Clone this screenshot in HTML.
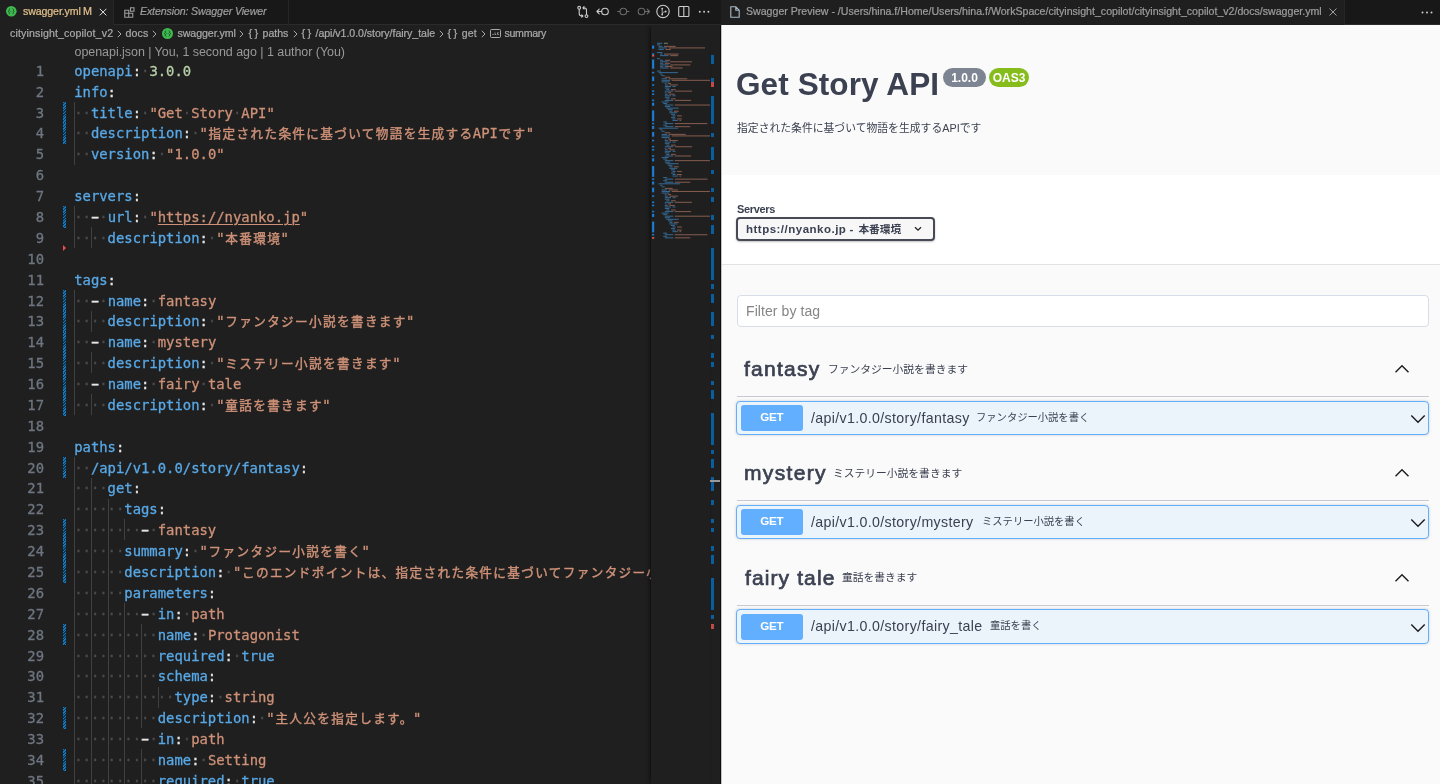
<!DOCTYPE html>
<html lang="ja">
<head>
<meta charset="utf-8">
<title>swagger.yml — Swagger Preview</title>
<style>
html,body{margin:0;padding:0;width:1440px;height:784px;overflow:hidden;background:#1f1f1f}
body{position:relative;font-family:"Liberation Sans","Noto Sans CJK JP",sans-serif;-webkit-font-smoothing:antialiased}
*{box-sizing:border-box}
#left{position:absolute;left:0;top:0;width:721px;height:784px;background:#1f1f1f;overflow:hidden}
#right{position:absolute;left:721px;top:0;width:719px;height:784px;background:#fafafa;overflow:hidden}
/* ---------- tab bars ---------- */
.tabbar{position:absolute;left:0;top:0;right:0;height:24.5px;background:#181818;border-bottom:1px solid #2b2b2b}
.tab{position:absolute;top:0;height:24.5px;font-size:10.6px;line-height:23px;white-space:nowrap;border-right:1px solid #262626}
.tab.act{background:#1f1f1f;height:24.5px}
.tab span{position:absolute;top:0;-webkit-text-stroke:.22px currentColor}
/* ---------- breadcrumbs ---------- */
.bc{position:absolute;left:0;top:24.45px;-webkit-text-stroke:.22px currentColor;width:651px;height:18px;font-size:10.6px;line-height:18px;color:#a9a9a9;white-space:nowrap}
.bc span{position:absolute;top:0}
.bc svg,.tab svg,.acts svg{position:absolute}
/* ---------- editor ---------- */
#ed{position:absolute;left:0;top:0;width:651px;height:784px;overflow:hidden;will-change:transform}
.lens{position:absolute;left:74.5px;top:41.7px;height:20px;line-height:20px;font-size:12.5px;color:#999;white-space:nowrap;letter-spacing:-0.05px}
.ln{position:absolute;left:0;width:1400px;height:20.885px;line-height:20.885px;font-family:"DejaVu Sans Mono","Liberation Mono","Noto Sans CJK JP",monospace;font-size:13.89px;white-space:pre;color:#d4d4d4;-webkit-text-stroke:0.3px currentColor}
.no{position:absolute;left:0;top:.8px;width:44px;text-align:right;color:#6e7681}
.c{position:absolute;left:74.2px;top:.8px}
.c span,.c i,.c u{font-style:normal}
.k{color:#58a8e6}.s{color:#ce9178}.n{color:#b5cea8}.p{color:#e6e6e6}.d{display:inline-block;transform:scaleX(1.7);-webkit-text-stroke:.5px currentColor}
.w{color:#4b4b4b}
.j{font-size:12.6px;letter-spacing:1.37px;position:relative;left:.7px;-webkit-text-stroke:.4px currentColor}
.s u{text-decoration:underline;text-underline-offset:2px;text-decoration-thickness:1px}
.g{position:absolute;top:0;width:1px;height:21px;background:#404040}
.m{position:absolute;left:63px;top:0;width:3.2px;height:21.4px;background:repeating-linear-gradient(135deg,#1479bd 0,#1479bd 1px,#0c3756 1px,#0c3756 2px)}
/* minimap */
#mm{position:absolute;left:651px;top:24.5px;width:70px;height:760px;background:#1f1f1f;box-shadow:-3px 0 4px -2px rgba(0,0,0,.6)}
#ruler{position:absolute;left:710px;top:42.5px;width:11px;height:742px;border-left:1px solid #1c1c1c}
#ruler b{position:absolute;left:0;width:3.2px;background:#085f9f}
#ruler b.r{background:#c04a44}
#ruler i{position:absolute;left:-1px;width:11px;height:1.6px;background:#9a9a9a}
/* ---------- swagger ---------- */
#sw{position:absolute;left:0;top:24.5px;width:719px;height:760px;background:#fafafa;color:#3b4151}
#sw .abs{position:absolute;white-space:nowrap}
.badge{position:absolute;top:43.5px;height:19px;border-radius:10px;color:#fff;font-weight:bold;font-size:12px;line-height:20.2px;text-align:center}
.tagname{font-size:21px;line-height:30px;color:#3b4151;-webkit-text-stroke:0.7px #3b4151}
.tagdesc{font-size:10.77px;line-height:20px;color:#3b4151}
.rule{position:absolute;left:16px;width:691.5px;height:1px;background:#c9cacf}
.op{position:absolute;left:15.2px;width:692.8px;height:34.5px;border:1px solid #61affe;border-radius:4px;background:#ebf3fb;box-shadow:0 0 3px rgba(0,0,0,.19)}
.get{position:absolute;left:3.8px;top:3.7px;width:61.6px;height:25.5px;border-radius:3px;background:#61affe;color:#fff;font-weight:bold;font-size:11.6px;line-height:24.2px;text-align:center;letter-spacing:-0.3px}
.path{position:absolute;left:73.5px;top:0;height:32.5px;line-height:32.5px;font-size:14.2px;letter-spacing:0.35px;color:#3b4151;white-space:nowrap}
.sum{position:absolute;top:0;height:32.5px;line-height:32.5px;font-size:10.3px;color:#3b4151;white-space:nowrap}
.tab span,.bc,#sw .abs,.badge,.get,.path,.sum{will-change:transform}
</style>
</head>
<body>
<div id="left">
  <div class="tabbar">
    <div class="tab act" style="left:0;width:113.5px;color:#e2c08d">
      <svg style="left:6.3px;top:6.2px" width="10.6" height="10.6" viewBox="0 0 22 22"><circle cx="11" cy="11" r="11" fill="#3fb950"/><path d="M8.5 5.5c-2 0-1.8 1.6-1.8 3 0 1.300-.6 2.100-1.700 2.500 1.100.4 1.700 1.200 1.700 2.500 0 1.400-.2 3 1.800 3M13.500 5.500c2 0 1.800 1.600 1.800 3 0 1.300.6 2.100 1.700 2.500-1.100.4-1.700 1.200-1.700 2.500 0 1.400.2 3-1.800 3" fill="none" stroke="#0d3a17" stroke-width="1.500"/><circle cx="9.600" cy="11" r=".8" fill="#0d3a17"/><circle cx="12.400" cy="11" r=".8" fill="#0d3a17"/></svg>
      <span style="left:22.5px;letter-spacing:-.1px">swagger.yml</span><span style="left:83.2px;font-size:10.8px">M</span>
      <svg style="left:99px;top:7.8px" width="8.2" height="8.2" viewBox="0 0 10 10"><path d="M1 1l8 8M9 1l-8 8" stroke="#e6e6e6" stroke-width="1.200" fill="none"/></svg>
    </div>
    <div class="tab" style="left:113.500px;width:175px;color:#9d9d9d;font-style:italic">
      <svg style="left:10.500px;top:6.500px" width="11" height="11" viewBox="0 0 22 22" fill="none" stroke="#9d9d9d" stroke-width="2.200"><path d="M1.500 6.500h8v14h-8zM9.500 12.500h8v8h-8zM1.500 12.500h8M13 1.500h7v7h-7z"/></svg>
      <span style="left:26px;letter-spacing:-.12px">Extension: Swagger Viewer</span>
    </div>
    <div class="acts">
      <svg style="left:570px;top:0" width="150" height="24" viewBox="0 0 150 24" fill="none" stroke="#cccccc" stroke-width="1.1" stroke-linecap="round" stroke-linejoin="round">
        <g>
          <circle cx="9.2" cy="7.8" r="1.4"/><circle cx="16.5" cy="16.1" r="1.4"/>
          <path d="M9.2 9.3v4.2a2.500 2.500 0 0 0 2.500 2.500h1.100M11.700 14.800l1.200 1.200-1.200 1.200"/>
          <path d="M16.500 14.600v-4.300a2.500 2.500 0 0 0-2.500-2.500h-1.100M14.100 6.600l-1.200 1.200 1.200 1.200"/>
        </g>
        <g>
          <circle cx="35" cy="11.500" r="3.300"/><path d="M31.600 11.500h-4.600M29.200 9.200l-2.300 2.300 2.300 2.300"/>
        </g>
        <g stroke="#6a6a6a">
          <circle cx="53.300" cy="11.500" r="3.300"/><path d="M50 11.500h-2.300M56.600 11.500h2.300"/>
        </g>
        <g stroke="#6a6a6a">
          <circle cx="71.500" cy="11.500" r="3.300"/><path d="M74.800 11.500h4.600M77.200 9.200l2.300 2.300-2.300 2.300"/>
        </g>
        <g>
          <circle cx="93" cy="11.400" r="6.200"/>
          <path d="M92.200 9v5.200M95.400 11.600c-1.600.300-2.800.9-3.200 2.200" stroke-width=".8"/>
          <circle cx="92.200" cy="8.600" r=".9" fill="#cccccc" stroke="none"/><circle cx="92.200" cy="14.600" r=".9" fill="#cccccc" stroke="none"/><circle cx="95.700" cy="11.500" r=".9" fill="#cccccc" stroke="none"/>
        </g>
        <g>
          <rect x="108.700" y="6.500" width="10.200" height="10" rx="1"/><path d="M113.800 6.500v10"/>
        </g>
        <g fill="#cccccc" stroke="none"><circle cx="129.800" cy="11.800" r=".95"/><circle cx="134.100" cy="11.800" r=".95"/><circle cx="138.400" cy="11.800" r=".95"/></g>
      </svg>
    </div>
  </div>
  <div class="bc"><span style="left:10px;letter-spacing:.14px">cityinsight_copilot_v2</span>
<svg style="left:116.5px;top:5.500px" width="5" height="8" viewBox="0 0 5 8"><path d="M.8.800l3.200 3.200-3.200 3.200" fill="none" stroke="#a9a9a9" stroke-width="1"/></svg>
<span style="left:125.500px;letter-spacing:.1px">docs</span>
<svg style="left:152.0px;top:5.500px" width="5" height="8" viewBox="0 0 5 8"><path d="M.8.800l3.200 3.200-3.200 3.200" fill="none" stroke="#a9a9a9" stroke-width="1"/></svg>
<svg style="left:161.5px;top:3.500px" width="11" height="11" viewBox="0 0 22 22"><circle cx="11" cy="11" r="11" fill="#3fb950"/><path d="M8.500 5.500c-2 0-1.800 1.600-1.800 3 0 1.300-.6 2.100-1.700 2.500 1.100.4 1.700 1.200 1.700 2.500 0 1.400-.2 3 1.800 3M13.500 5.500c2 0 1.800 1.600 1.800 3 0 1.300.6 2.100 1.700 2.500-1.100.4-1.700 1.200-1.700 2.500 0 1.400.2 3-1.800 3" fill="none" stroke="#0d3a17" stroke-width="1.500"/><circle cx="9.600" cy="11" r=".8" fill="#0d3a17"/><circle cx="12.400" cy="11" r=".8" fill="#0d3a17"/></svg>
<span style="left:177.500px;letter-spacing:-.05px">swagger.yml</span>
<svg style="left:239.0px;top:5.500px" width="5" height="8" viewBox="0 0 5 8"><path d="M.8.800l3.200 3.200-3.200 3.200" fill="none" stroke="#a9a9a9" stroke-width="1"/></svg>
<span style="left:248.5px;top:-.5px;font-size:11.2px;letter-spacing:2.2px">{}</span>
<span style="left:262.500px">paths</span>
<svg style="left:292.5px;top:5.500px" width="5" height="8" viewBox="0 0 5 8"><path d="M.8.800l3.200 3.200-3.200 3.200" fill="none" stroke="#a9a9a9" stroke-width="1"/></svg>
<span style="left:301.5px;top:-.5px;font-size:11.2px;letter-spacing:2.2px">{}</span>
<span style="left:315.500px;letter-spacing:-.04px">/api/v1.0.0/story/fairy_tale</span>
<svg style="left:439.0px;top:5.500px" width="5" height="8" viewBox="0 0 5 8"><path d="M.8.800l3.200 3.200-3.200 3.200" fill="none" stroke="#a9a9a9" stroke-width="1"/></svg>
<span style="left:447.5px;top:-.5px;font-size:11.2px;letter-spacing:2.2px">{}</span>
<span style="left:461.750px;letter-spacing:.1px">get</span>
<svg style="left:481.0px;top:5.500px" width="5" height="8" viewBox="0 0 5 8"><path d="M.8.800l3.200 3.200-3.200 3.200" fill="none" stroke="#a9a9a9" stroke-width="1"/></svg>
<svg style="left:490px;top:4.500px" width="11" height="9" viewBox="0 0 11 9" fill="none" stroke="#a9a9a9" stroke-width="1"><rect x=".5" y=".5" width="10" height="8" rx="1"/><path d="M2.300 5.500h1.500M5 3.500v2h1.200M8.800 3.800h-1.300v1.700h1.300" stroke-width=".8"/></svg>
<span style="left:504.500px;letter-spacing:-.29px">summary</span></div>
  <div id="ed">
    <div class="lens">openapi.json | You, 1 second ago | 1 author (You)</div>
<div style="position:absolute;left:62.8px;top:244.9px;width:0;height:0;border-top:3.3px solid transparent;border-bottom:3.3px solid transparent;border-left:3.9px solid #f14c4c"></div>
<div class="ln" style="top:60.00px"><span class="no">1</span><span class="c"><span class="k">openapi</span><span class="p">:</span><i class="w">·</i><span class="n">3.0.0</span></span></div>
<div class="ln" style="top:80.89px"><span class="no">2</span><span class="c"><span class="k">info</span><span class="p">:</span></span></div>
<div class="ln" style="top:101.77px"><span class="no">3</span><b class="m"></b><b class="g" style="left:74.20px"></b><span class="c"><i class="w">··</i><span class="k">title</span><span class="p">:</span><i class="w">·</i><span class="s">"Get<i class="w">·</i>Story<i class="w">·</i>API"</span></span></div>
<div class="ln" style="top:122.66px"><span class="no">4</span><b class="m"></b><b class="g" style="left:74.20px"></b><span class="c"><i class="w">··</i><span class="k">description</span><span class="p">:</span><i class="w">·</i><span class="s">"<span class="j">指定された条件に基づいて物語を生成する</span>API<span class="j">です</span>"</span></span></div>
<div class="ln" style="top:143.54px"><span class="no">5</span><b class="g" style="left:74.20px"></b><span class="c"><i class="w">··</i><span class="k">version</span><span class="p">:</span><i class="w">·</i><span class="s">"1.0.0"</span></span></div>
<div class="ln" style="top:164.43px"><span class="no">6</span><span class="c"></span></div>
<div class="ln" style="top:185.31px"><span class="no">7</span><span class="c"><span class="k">servers</span><span class="p">:</span></span></div>
<div class="ln" style="top:206.20px"><span class="no">8</span><b class="m"></b><b class="g" style="left:74.20px"></b><span class="c"><i class="w">··</i><span class="p d">-</span><i class="w">·</i><span class="k">url</span><span class="p">:</span><i class="w">·</i><span class="s">"<u>https://nyanko.jp</u>"</span></span></div>
<div class="ln" style="top:227.08px"><span class="no">9</span><b class="g" style="left:74.20px"></b><b class="g" style="left:90.93px"></b><span class="c"><i class="w">····</i><span class="k">description</span><span class="p">:</span><i class="w">·</i><span class="s">"<span class="j">本番環境</span>"</span></span></div>
<div class="ln" style="top:247.97px"><span class="no">10</span><span class="c"></span></div>
<div class="ln" style="top:268.85px"><span class="no">11</span><span class="c"><span class="k">tags</span><span class="p">:</span></span></div>
<div class="ln" style="top:289.74px"><span class="no">12</span><b class="m"></b><b class="g" style="left:74.20px"></b><span class="c"><i class="w">··</i><span class="p d">-</span><i class="w">·</i><span class="k">name</span><span class="p">:</span><i class="w">·</i><span class="s">fantasy</span></span></div>
<div class="ln" style="top:310.62px"><span class="no">13</span><b class="m"></b><b class="g" style="left:74.20px"></b><b class="g" style="left:90.93px"></b><span class="c"><i class="w">····</i><span class="k">description</span><span class="p">:</span><i class="w">·</i><span class="s">"<span class="j">ファンタジー小説を書きます</span>"</span></span></div>
<div class="ln" style="top:331.50px"><span class="no">14</span><b class="m"></b><b class="g" style="left:74.20px"></b><span class="c"><i class="w">··</i><span class="p d">-</span><i class="w">·</i><span class="k">name</span><span class="p">:</span><i class="w">·</i><span class="s">mystery</span></span></div>
<div class="ln" style="top:352.39px"><span class="no">15</span><b class="m"></b><b class="g" style="left:74.20px"></b><b class="g" style="left:90.93px"></b><span class="c"><i class="w">····</i><span class="k">description</span><span class="p">:</span><i class="w">·</i><span class="s">"<span class="j">ミステリー小説を書きます</span>"</span></span></div>
<div class="ln" style="top:373.28px"><span class="no">16</span><b class="m"></b><b class="g" style="left:74.20px"></b><span class="c"><i class="w">··</i><span class="p d">-</span><i class="w">·</i><span class="k">name</span><span class="p">:</span><i class="w">·</i><span class="s">fairy<i class="w">·</i>tale</span></span></div>
<div class="ln" style="top:394.16px"><span class="no">17</span><b class="m"></b><b class="g" style="left:74.20px"></b><b class="g" style="left:90.93px"></b><span class="c"><i class="w">····</i><span class="k">description</span><span class="p">:</span><i class="w">·</i><span class="s">"<span class="j">童話を書きます</span>"</span></span></div>
<div class="ln" style="top:415.05px"><span class="no">18</span><span class="c"></span></div>
<div class="ln" style="top:435.93px"><span class="no">19</span><span class="c"><span class="k">paths</span><span class="p">:</span></span></div>
<div class="ln" style="top:456.82px"><span class="no">20</span><b class="m"></b><b class="g" style="left:74.20px"></b><span class="c"><i class="w">··</i><span class="k">/api/v1.0.0/story/fantasy</span><span class="p">:</span></span></div>
<div class="ln" style="top:477.70px"><span class="no">21</span><b class="g" style="left:74.20px"></b><b class="g" style="left:90.93px"></b><span class="c"><i class="w">····</i><span class="k">get</span><span class="p">:</span></span></div>
<div class="ln" style="top:498.59px"><span class="no">22</span><b class="g" style="left:74.20px"></b><b class="g" style="left:90.93px"></b><b class="g" style="left:107.65px"></b><span class="c"><i class="w">······</i><span class="k">tags</span><span class="p">:</span></span></div>
<div class="ln" style="top:519.47px"><span class="no">23</span><b class="m"></b><b class="g" style="left:74.20px"></b><b class="g" style="left:90.93px"></b><b class="g" style="left:107.65px"></b><b class="g" style="left:124.38px"></b><span class="c"><i class="w">········</i><span class="p d">-</span><i class="w">·</i><span class="s">fantasy</span></span></div>
<div class="ln" style="top:540.36px"><span class="no">24</span><b class="m"></b><b class="g" style="left:74.20px"></b><b class="g" style="left:90.93px"></b><b class="g" style="left:107.65px"></b><span class="c"><i class="w">······</i><span class="k">summary</span><span class="p">:</span><i class="w">·</i><span class="s">"<span class="j">ファンタジー小説を書く</span>"</span></span></div>
<div class="ln" style="top:561.24px"><span class="no">25</span><b class="m"></b><b class="g" style="left:74.20px"></b><b class="g" style="left:90.93px"></b><b class="g" style="left:107.65px"></b><span class="c"><i class="w">······</i><span class="k">description</span><span class="p">:</span><i class="w">·</i><span class="s">"<span class="j">このエンドポイントは、指定された条件に基づいてファンタジー小説を生成します。</span>"</span></span></div>
<div class="ln" style="top:582.12px"><span class="no">26</span><b class="g" style="left:74.20px"></b><b class="g" style="left:90.93px"></b><b class="g" style="left:107.65px"></b><span class="c"><i class="w">······</i><span class="k">parameters</span><span class="p">:</span></span></div>
<div class="ln" style="top:603.01px"><span class="no">27</span><b class="g" style="left:74.20px"></b><b class="g" style="left:90.93px"></b><b class="g" style="left:107.65px"></b><b class="g" style="left:124.38px"></b><span class="c"><i class="w">········</i><span class="p d">-</span><i class="w">·</i><span class="k">in</span><span class="p">:</span><i class="w">·</i><span class="s">path</span></span></div>
<div class="ln" style="top:623.90px"><span class="no">28</span><b class="m"></b><b class="g" style="left:74.20px"></b><b class="g" style="left:90.93px"></b><b class="g" style="left:107.65px"></b><b class="g" style="left:124.38px"></b><b class="g" style="left:141.10px"></b><span class="c"><i class="w">··········</i><span class="k">name</span><span class="p">:</span><i class="w">·</i><span class="s">Protagonist</span></span></div>
<div class="ln" style="top:644.78px"><span class="no">29</span><b class="g" style="left:74.20px"></b><b class="g" style="left:90.93px"></b><b class="g" style="left:107.65px"></b><b class="g" style="left:124.38px"></b><b class="g" style="left:141.10px"></b><span class="c"><i class="w">··········</i><span class="k">required</span><span class="p">:</span><i class="w">·</i><span class="k">true</span></span></div>
<div class="ln" style="top:665.67px"><span class="no">30</span><b class="g" style="left:74.20px"></b><b class="g" style="left:90.93px"></b><b class="g" style="left:107.65px"></b><b class="g" style="left:124.38px"></b><b class="g" style="left:141.10px"></b><span class="c"><i class="w">··········</i><span class="k">schema</span><span class="p">:</span></span></div>
<div class="ln" style="top:686.55px"><span class="no">31</span><b class="g" style="left:74.20px"></b><b class="g" style="left:90.93px"></b><b class="g" style="left:107.65px"></b><b class="g" style="left:124.38px"></b><b class="g" style="left:141.10px"></b><b class="g" style="left:157.82px"></b><span class="c"><i class="w">············</i><span class="k">type</span><span class="p">:</span><i class="w">·</i><span class="s">string</span></span></div>
<div class="ln" style="top:707.44px"><span class="no">32</span><b class="m"></b><b class="g" style="left:74.20px"></b><b class="g" style="left:90.93px"></b><b class="g" style="left:107.65px"></b><b class="g" style="left:124.38px"></b><b class="g" style="left:141.10px"></b><span class="c"><i class="w">··········</i><span class="k">description</span><span class="p">:</span><i class="w">·</i><span class="s">"<span class="j">主人公を指定します。</span>"</span></span></div>
<div class="ln" style="top:728.32px"><span class="no">33</span><b class="g" style="left:74.20px"></b><b class="g" style="left:90.93px"></b><b class="g" style="left:107.65px"></b><b class="g" style="left:124.38px"></b><span class="c"><i class="w">········</i><span class="p d">-</span><i class="w">·</i><span class="k">in</span><span class="p">:</span><i class="w">·</i><span class="s">path</span></span></div>
<div class="ln" style="top:749.21px"><span class="no">34</span><b class="m"></b><b class="g" style="left:74.20px"></b><b class="g" style="left:90.93px"></b><b class="g" style="left:107.65px"></b><b class="g" style="left:124.38px"></b><b class="g" style="left:141.10px"></b><span class="c"><i class="w">··········</i><span class="k">name</span><span class="p">:</span><i class="w">·</i><span class="s">Setting</span></span></div>
<div class="ln" style="top:770.09px"><span class="no">35</span><b class="g" style="left:74.20px"></b><b class="g" style="left:90.93px"></b><b class="g" style="left:107.65px"></b><b class="g" style="left:124.38px"></b><b class="g" style="left:141.10px"></b><span class="c"><i class="w">··········</i><span class="k">required</span><span class="p">:</span><i class="w">·</i><span class="k">true</span></span></div>
  </div>
  <div id="mm"><svg width="70" height="760" viewBox="0 0 70 760" style="position:absolute;left:0;top:0">
<rect x="6.0" y="17.75" width="5.4" height="1.05" fill="#35668f"/>
<rect x="13.0" y="17.75" width="3.9" height="1.05" fill="#6e7f69"/>
<rect x="6.0" y="19.29" width="3.1" height="1.05" fill="#35668f"/>
<rect x="7.5" y="20.84" width="3.9" height="1.05" fill="#35668f"/>
<rect x="13.0" y="20.84" width="11.6" height="1.05" fill="#815a4d"/>
<rect x="7.5" y="22.38" width="8.5" height="1.05" fill="#35668f"/>
<rect x="17.6" y="22.38" width="36.4" height="1.05" fill="#815a4d"/>
<rect x="7.5" y="23.93" width="5.4" height="1.05" fill="#35668f"/>
<rect x="14.5" y="23.93" width="5.4" height="1.05" fill="#815a4d"/>
<rect x="6.0" y="27.01" width="5.4" height="1.05" fill="#35668f"/>
<rect x="9.1" y="28.56" width="2.3" height="1.05" fill="#35668f"/>
<rect x="13.0" y="28.56" width="14.7" height="1.05" fill="#815a4d"/>
<rect x="9.1" y="30.10" width="8.5" height="1.05" fill="#35668f"/>
<rect x="19.2" y="30.10" width="7.8" height="1.05" fill="#815a4d"/>
<rect x="6.0" y="33.19" width="3.1" height="1.05" fill="#35668f"/>
<rect x="9.1" y="34.73" width="3.1" height="1.05" fill="#35668f"/>
<rect x="13.8" y="34.73" width="5.4" height="1.05" fill="#815a4d"/>
<rect x="9.1" y="36.28" width="8.5" height="1.05" fill="#35668f"/>
<rect x="19.2" y="36.28" width="21.7" height="1.05" fill="#815a4d"/>
<rect x="9.1" y="37.82" width="3.1" height="1.05" fill="#35668f"/>
<rect x="13.8" y="37.82" width="5.4" height="1.05" fill="#815a4d"/>
<rect x="9.1" y="39.37" width="8.5" height="1.05" fill="#35668f"/>
<rect x="19.2" y="39.37" width="20.2" height="1.05" fill="#815a4d"/>
<rect x="9.1" y="40.91" width="3.1" height="1.05" fill="#35668f"/>
<rect x="13.8" y="40.91" width="7.8" height="1.05" fill="#815a4d"/>
<rect x="9.1" y="42.45" width="8.5" height="1.05" fill="#35668f"/>
<rect x="19.2" y="42.45" width="12.4" height="1.05" fill="#815a4d"/>
<rect x="6.0" y="45.54" width="3.9" height="1.05" fill="#35668f"/>
<rect x="7.5" y="47.09" width="19.4" height="1.05" fill="#35668f"/>
<rect x="9.1" y="48.63" width="2.3" height="1.05" fill="#35668f"/>
<rect x="10.6" y="50.17" width="3.1" height="1.05" fill="#35668f"/>
<rect x="13.8" y="51.72" width="5.4" height="1.05" fill="#815a4d"/>
<rect x="10.6" y="53.26" width="5.4" height="1.05" fill="#35668f"/>
<rect x="17.6" y="53.26" width="18.6" height="1.05" fill="#815a4d"/>
<rect x="10.6" y="54.81" width="8.5" height="1.05" fill="#35668f"/>
<rect x="20.7" y="54.81" width="38.6" height="1.05" fill="#815a4d"/>
<rect x="10.6" y="56.35" width="7.8" height="1.05" fill="#35668f"/>
<rect x="13.8" y="57.89" width="1.6" height="1.05" fill="#35668f"/>
<rect x="16.9" y="57.89" width="3.1" height="1.05" fill="#815a4d"/>
<rect x="13.8" y="59.44" width="3.1" height="1.05" fill="#35668f"/>
<rect x="18.4" y="59.44" width="8.5" height="1.05" fill="#815a4d"/>
<rect x="13.8" y="60.98" width="6.2" height="1.05" fill="#35668f"/>
<rect x="21.5" y="60.98" width="3.1" height="1.05" fill="#35668f"/>
<rect x="13.8" y="62.53" width="4.7" height="1.05" fill="#35668f"/>
<rect x="15.3" y="64.07" width="3.1" height="1.05" fill="#35668f"/>
<rect x="20.0" y="64.07" width="4.7" height="1.05" fill="#815a4d"/>
<rect x="13.8" y="65.61" width="8.5" height="1.05" fill="#35668f"/>
<rect x="23.8" y="65.61" width="17.1" height="1.05" fill="#815a4d"/>
<rect x="13.8" y="67.16" width="1.6" height="1.05" fill="#35668f"/>
<rect x="16.9" y="67.16" width="3.1" height="1.05" fill="#815a4d"/>
<rect x="13.8" y="68.70" width="3.1" height="1.05" fill="#35668f"/>
<rect x="18.4" y="68.70" width="5.4" height="1.05" fill="#815a4d"/>
<rect x="13.8" y="70.25" width="6.2" height="1.05" fill="#35668f"/>
<rect x="21.5" y="70.25" width="3.1" height="1.05" fill="#35668f"/>
<rect x="13.8" y="71.79" width="4.7" height="1.05" fill="#35668f"/>
<rect x="15.3" y="73.33" width="3.1" height="1.05" fill="#35668f"/>
<rect x="20.0" y="73.33" width="4.7" height="1.05" fill="#815a4d"/>
<rect x="13.8" y="74.88" width="8.5" height="1.05" fill="#35668f"/>
<rect x="23.8" y="74.88" width="16.3" height="1.05" fill="#815a4d"/>
<rect x="10.6" y="76.42" width="7.0" height="1.05" fill="#35668f"/>
<rect x="12.2" y="77.97" width="3.9" height="1.05" fill="#35668f"/>
<rect x="13.8" y="79.51" width="8.5" height="1.05" fill="#35668f"/>
<rect x="23.8" y="79.51" width="35.5" height="1.05" fill="#815a4d"/>
<rect x="13.8" y="81.05" width="5.4" height="1.05" fill="#35668f"/>
<rect x="15.3" y="82.60" width="12.4" height="1.05" fill="#35668f"/>
<rect x="16.9" y="84.14" width="4.7" height="1.05" fill="#35668f"/>
<rect x="18.4" y="85.69" width="3.1" height="1.05" fill="#35668f"/>
<rect x="23.0" y="85.69" width="4.7" height="1.05" fill="#815a4d"/>
<rect x="18.4" y="87.23" width="7.8" height="1.05" fill="#35668f"/>
<rect x="20.0" y="88.77" width="3.9" height="1.05" fill="#35668f"/>
<rect x="21.5" y="90.32" width="3.1" height="1.05" fill="#35668f"/>
<rect x="26.1" y="90.32" width="4.7" height="1.05" fill="#815a4d"/>
<rect x="20.0" y="91.86" width="3.9" height="1.05" fill="#35668f"/>
<rect x="21.5" y="93.41" width="3.1" height="1.05" fill="#35668f"/>
<rect x="26.1" y="93.41" width="4.7" height="1.05" fill="#815a4d"/>
<rect x="21.5" y="94.95" width="5.4" height="1.05" fill="#35668f"/>
<rect x="28.5" y="94.95" width="1.6" height="1.05" fill="#815a4d"/>
<rect x="12.2" y="96.49" width="3.9" height="1.05" fill="#35668f"/>
<rect x="13.8" y="98.04" width="8.5" height="1.05" fill="#35668f"/>
<rect x="23.8" y="98.04" width="32.6" height="1.05" fill="#815a4d"/>
<rect x="12.2" y="99.58" width="3.9" height="1.05" fill="#35668f"/>
<rect x="13.8" y="101.13" width="8.5" height="1.05" fill="#35668f"/>
<rect x="23.8" y="101.13" width="15.5" height="1.05" fill="#815a4d"/>
<rect x="7.5" y="102.67" width="19.4" height="1.05" fill="#35668f"/>
<rect x="9.1" y="104.21" width="2.3" height="1.05" fill="#35668f"/>
<rect x="10.6" y="105.76" width="3.1" height="1.05" fill="#35668f"/>
<rect x="13.8" y="107.30" width="5.4" height="1.05" fill="#815a4d"/>
<rect x="10.6" y="108.85" width="5.4" height="1.05" fill="#35668f"/>
<rect x="17.6" y="108.85" width="17.1" height="1.05" fill="#815a4d"/>
<rect x="10.6" y="110.39" width="8.5" height="1.05" fill="#35668f"/>
<rect x="20.7" y="110.39" width="38.6" height="1.05" fill="#815a4d"/>
<rect x="10.6" y="111.93" width="7.8" height="1.05" fill="#35668f"/>
<rect x="13.8" y="113.48" width="1.6" height="1.05" fill="#35668f"/>
<rect x="16.9" y="113.48" width="3.1" height="1.05" fill="#815a4d"/>
<rect x="13.8" y="115.02" width="3.1" height="1.05" fill="#35668f"/>
<rect x="18.4" y="115.02" width="8.5" height="1.05" fill="#815a4d"/>
<rect x="13.8" y="116.57" width="6.2" height="1.05" fill="#35668f"/>
<rect x="21.5" y="116.57" width="3.1" height="1.05" fill="#35668f"/>
<rect x="13.8" y="118.11" width="4.7" height="1.05" fill="#35668f"/>
<rect x="15.3" y="119.65" width="3.1" height="1.05" fill="#35668f"/>
<rect x="20.0" y="119.65" width="4.7" height="1.05" fill="#815a4d"/>
<rect x="13.8" y="121.20" width="8.5" height="1.05" fill="#35668f"/>
<rect x="23.8" y="121.20" width="17.1" height="1.05" fill="#815a4d"/>
<rect x="13.8" y="122.74" width="1.6" height="1.05" fill="#35668f"/>
<rect x="16.9" y="122.74" width="3.1" height="1.05" fill="#815a4d"/>
<rect x="13.8" y="124.29" width="3.1" height="1.05" fill="#35668f"/>
<rect x="18.4" y="124.29" width="5.4" height="1.05" fill="#815a4d"/>
<rect x="13.8" y="125.83" width="6.2" height="1.05" fill="#35668f"/>
<rect x="21.5" y="125.83" width="3.1" height="1.05" fill="#35668f"/>
<rect x="13.8" y="127.37" width="4.7" height="1.05" fill="#35668f"/>
<rect x="15.3" y="128.92" width="3.1" height="1.05" fill="#35668f"/>
<rect x="20.0" y="128.92" width="4.7" height="1.05" fill="#815a4d"/>
<rect x="13.8" y="130.46" width="8.5" height="1.05" fill="#35668f"/>
<rect x="23.8" y="130.46" width="16.3" height="1.05" fill="#815a4d"/>
<rect x="10.6" y="132.01" width="7.0" height="1.05" fill="#35668f"/>
<rect x="12.2" y="133.55" width="3.9" height="1.05" fill="#35668f"/>
<rect x="13.8" y="135.09" width="8.5" height="1.05" fill="#35668f"/>
<rect x="23.8" y="135.09" width="35.5" height="1.05" fill="#815a4d"/>
<rect x="13.8" y="136.64" width="5.4" height="1.05" fill="#35668f"/>
<rect x="15.3" y="138.18" width="12.4" height="1.05" fill="#35668f"/>
<rect x="16.9" y="139.73" width="4.7" height="1.05" fill="#35668f"/>
<rect x="18.4" y="141.27" width="3.1" height="1.05" fill="#35668f"/>
<rect x="23.0" y="141.27" width="4.7" height="1.05" fill="#815a4d"/>
<rect x="18.4" y="142.81" width="7.8" height="1.05" fill="#35668f"/>
<rect x="20.0" y="144.36" width="3.9" height="1.05" fill="#35668f"/>
<rect x="21.5" y="145.90" width="3.1" height="1.05" fill="#35668f"/>
<rect x="26.1" y="145.90" width="4.7" height="1.05" fill="#815a4d"/>
<rect x="20.0" y="147.45" width="3.9" height="1.05" fill="#35668f"/>
<rect x="21.5" y="148.99" width="3.1" height="1.05" fill="#35668f"/>
<rect x="26.1" y="148.99" width="4.7" height="1.05" fill="#815a4d"/>
<rect x="21.5" y="150.53" width="5.4" height="1.05" fill="#35668f"/>
<rect x="28.5" y="150.53" width="1.6" height="1.05" fill="#815a4d"/>
<rect x="12.2" y="152.08" width="3.9" height="1.05" fill="#35668f"/>
<rect x="13.8" y="153.62" width="8.5" height="1.05" fill="#35668f"/>
<rect x="23.8" y="153.62" width="32.6" height="1.05" fill="#815a4d"/>
<rect x="12.2" y="155.17" width="3.9" height="1.05" fill="#35668f"/>
<rect x="13.8" y="156.71" width="8.5" height="1.05" fill="#35668f"/>
<rect x="23.8" y="156.71" width="15.5" height="1.05" fill="#815a4d"/>
<rect x="7.5" y="158.25" width="21.7" height="1.05" fill="#35668f"/>
<rect x="9.1" y="159.80" width="2.3" height="1.05" fill="#35668f"/>
<rect x="10.6" y="161.34" width="3.1" height="1.05" fill="#35668f"/>
<rect x="13.8" y="162.89" width="7.8" height="1.05" fill="#815a4d"/>
<rect x="10.6" y="164.43" width="5.4" height="1.05" fill="#35668f"/>
<rect x="17.6" y="164.43" width="9.3" height="1.05" fill="#815a4d"/>
<rect x="10.6" y="165.97" width="8.5" height="1.05" fill="#35668f"/>
<rect x="20.7" y="165.97" width="38.6" height="1.05" fill="#815a4d"/>
<rect x="10.6" y="167.52" width="7.8" height="1.05" fill="#35668f"/>
<rect x="13.8" y="169.06" width="1.6" height="1.05" fill="#35668f"/>
<rect x="16.9" y="169.06" width="3.1" height="1.05" fill="#815a4d"/>
<rect x="13.8" y="170.61" width="3.1" height="1.05" fill="#35668f"/>
<rect x="18.4" y="170.61" width="8.5" height="1.05" fill="#815a4d"/>
<rect x="13.8" y="172.15" width="6.2" height="1.05" fill="#35668f"/>
<rect x="21.5" y="172.15" width="3.1" height="1.05" fill="#35668f"/>
<rect x="13.8" y="173.69" width="4.7" height="1.05" fill="#35668f"/>
<rect x="15.3" y="175.24" width="3.1" height="1.05" fill="#35668f"/>
<rect x="20.0" y="175.24" width="4.7" height="1.05" fill="#815a4d"/>
<rect x="13.8" y="176.78" width="8.5" height="1.05" fill="#35668f"/>
<rect x="23.8" y="176.78" width="17.1" height="1.05" fill="#815a4d"/>
<rect x="13.8" y="178.33" width="1.6" height="1.05" fill="#35668f"/>
<rect x="16.9" y="178.33" width="3.1" height="1.05" fill="#815a4d"/>
<rect x="13.8" y="179.87" width="3.1" height="1.05" fill="#35668f"/>
<rect x="18.4" y="179.87" width="5.4" height="1.05" fill="#815a4d"/>
<rect x="13.8" y="181.41" width="6.2" height="1.05" fill="#35668f"/>
<rect x="21.5" y="181.41" width="3.1" height="1.05" fill="#35668f"/>
<rect x="13.8" y="182.96" width="4.7" height="1.05" fill="#35668f"/>
<rect x="15.3" y="184.50" width="3.1" height="1.05" fill="#35668f"/>
<rect x="20.0" y="184.50" width="4.7" height="1.05" fill="#815a4d"/>
<rect x="13.8" y="186.05" width="8.5" height="1.05" fill="#35668f"/>
<rect x="23.8" y="186.05" width="16.3" height="1.05" fill="#815a4d"/>
<rect x="10.6" y="187.59" width="7.0" height="1.05" fill="#35668f"/>
<rect x="12.2" y="189.13" width="3.9" height="1.05" fill="#35668f"/>
<rect x="13.8" y="190.68" width="8.5" height="1.05" fill="#35668f"/>
<rect x="23.8" y="190.68" width="35.5" height="1.05" fill="#815a4d"/>
<rect x="13.8" y="192.22" width="5.4" height="1.05" fill="#35668f"/>
<rect x="15.3" y="193.77" width="12.4" height="1.05" fill="#35668f"/>
<rect x="16.9" y="195.31" width="4.7" height="1.05" fill="#35668f"/>
<rect x="18.4" y="196.85" width="3.1" height="1.05" fill="#35668f"/>
<rect x="23.0" y="196.85" width="4.7" height="1.05" fill="#815a4d"/>
<rect x="18.4" y="198.40" width="7.8" height="1.05" fill="#35668f"/>
<rect x="20.0" y="199.94" width="3.9" height="1.05" fill="#35668f"/>
<rect x="21.5" y="201.49" width="3.1" height="1.05" fill="#35668f"/>
<rect x="26.1" y="201.49" width="4.7" height="1.05" fill="#815a4d"/>
<rect x="20.0" y="203.03" width="3.9" height="1.05" fill="#35668f"/>
<rect x="21.5" y="204.57" width="3.1" height="1.05" fill="#35668f"/>
<rect x="26.1" y="204.57" width="4.7" height="1.05" fill="#815a4d"/>
<rect x="21.5" y="206.12" width="5.4" height="1.05" fill="#35668f"/>
<rect x="28.5" y="206.12" width="1.6" height="1.05" fill="#815a4d"/>
<rect x="12.2" y="207.66" width="3.9" height="1.05" fill="#35668f"/>
<rect x="13.8" y="209.21" width="8.5" height="1.05" fill="#35668f"/>
<rect x="23.8" y="209.21" width="32.6" height="1.05" fill="#815a4d"/>
<rect x="12.2" y="210.75" width="3.9" height="1.05" fill="#35668f"/>
<rect x="13.8" y="212.29" width="8.5" height="1.05" fill="#35668f"/>
<rect x="23.8" y="212.29" width="15.5" height="1.05" fill="#815a4d"/>
<rect x="1.1" y="20.59" width="2.1" height="3.09" fill="#1a7fd6"/>
<rect x="1.1" y="28.31" width="2.1" height="1.54" fill="#1a7fd6"/>
<rect x="1.1" y="34.48" width="2.1" height="9.26" fill="#1a7fd6"/>
<rect x="1.1" y="46.84" width="2.1" height="1.54" fill="#1a7fd6"/>
<rect x="1.1" y="51.47" width="2.1" height="4.63" fill="#1a7fd6"/>
<rect x="1.1" y="59.19" width="2.1" height="1.54" fill="#1a7fd6"/>
<rect x="1.1" y="65.36" width="2.1" height="1.54" fill="#1a7fd6"/>
<rect x="1.1" y="68.45" width="2.1" height="1.54" fill="#1a7fd6"/>
<rect x="1.1" y="74.63" width="2.1" height="1.54" fill="#1a7fd6"/>
<rect x="1.1" y="77.72" width="2.1" height="3.09" fill="#1a7fd6"/>
<rect x="1.1" y="85.44" width="2.1" height="10.81" fill="#1a7fd6"/>
<rect x="1.1" y="97.79" width="2.1" height="1.54" fill="#1a7fd6"/>
<rect x="1.1" y="100.88" width="2.1" height="3.09" fill="#1a7fd6"/>
<rect x="1.1" y="107.05" width="2.1" height="4.63" fill="#1a7fd6"/>
<rect x="1.1" y="114.77" width="2.1" height="1.54" fill="#1a7fd6"/>
<rect x="1.1" y="120.95" width="2.1" height="1.54" fill="#1a7fd6"/>
<rect x="1.1" y="124.04" width="2.1" height="1.54" fill="#1a7fd6"/>
<rect x="1.1" y="130.21" width="2.1" height="1.54" fill="#1a7fd6"/>
<rect x="1.1" y="133.30" width="2.1" height="3.09" fill="#1a7fd6"/>
<rect x="1.1" y="141.02" width="2.1" height="10.81" fill="#1a7fd6"/>
<rect x="1.1" y="153.37" width="2.1" height="1.54" fill="#1a7fd6"/>
<rect x="1.1" y="156.46" width="2.1" height="3.09" fill="#1a7fd6"/>
<rect x="1.1" y="162.64" width="2.1" height="4.63" fill="#1a7fd6"/>
<rect x="1.1" y="170.36" width="2.1" height="1.54" fill="#1a7fd6"/>
<rect x="1.1" y="176.53" width="2.1" height="1.54" fill="#1a7fd6"/>
<rect x="1.1" y="179.62" width="2.1" height="1.54" fill="#1a7fd6"/>
<rect x="1.1" y="185.80" width="2.1" height="1.54" fill="#1a7fd6"/>
<rect x="1.1" y="188.88" width="2.1" height="3.09" fill="#1a7fd6"/>
<rect x="1.1" y="196.60" width="2.1" height="10.81" fill="#1a7fd6"/>
<rect x="1.1" y="208.96" width="2.1" height="1.54" fill="#1a7fd6"/>
<rect x="1.1" y="29.85" width="2.1" height="1.74" fill="#e0524f"/>
<rect x="1.1" y="212.04" width="2.1" height="1.74" fill="#e0524f"/>
  </svg></div>
  <div id="ruler"><b style="top:12.2px;height:9.2px"></b><b style="top:35.1px;height:4.6px"></b><b style="top:53.5px;height:27.6px"></b><b style="top:90.2px;height:4.6px"></b><b style="top:104.0px;height:13.8px"></b><b style="top:127.0px;height:4.6px"></b><b style="top:145.4px;height:4.6px"></b><b style="top:154.5px;height:4.6px"></b><b style="top:172.9px;height:4.6px"></b><b style="top:182.1px;height:9.2px"></b><b style="top:205.0px;height:32.1px"></b><b style="top:241.8px;height:4.6px"></b><b style="top:251.0px;height:9.2px"></b><b style="top:269.3px;height:13.8px"></b><b style="top:292.3px;height:4.6px"></b><b style="top:310.7px;height:4.6px"></b><b style="top:319.8px;height:4.6px"></b><b style="top:338.2px;height:4.6px"></b><b style="top:347.4px;height:9.2px"></b><b style="top:370.4px;height:32.1px"></b><b style="top:407.1px;height:4.6px"></b><b style="top:416.3px;height:9.2px"></b><b style="top:434.6px;height:13.8px"></b><b style="top:457.6px;height:4.6px"></b><b style="top:476.0px;height:4.6px"></b><b style="top:485.2px;height:4.6px"></b><b style="top:503.5px;height:4.6px"></b><b style="top:512.7px;height:9.2px"></b><b style="top:535.7px;height:32.1px"></b><b style="top:572.4px;height:4.6px"></b><b class="r" style="top:39.7px;height:4.6px"></b><b class="r" style="top:581.6px;height:4.6px"></b><i style="top:437.8px"></i></div>
</div>
<div style="position:absolute;left:720px;top:24.5px;width:1px;height:760px;background:#0c0c0c;z-index:5"></div>
<div style="position:absolute;left:721px;top:24.5px;width:1px;height:760px;background:#c4c4c4;z-index:5"></div>
<div id="right">
  <div class="tabbar">
    <div class="tab act" style="left:0;width:624px;color:#9d9d9d">
      <svg style="left:9px;top:5.500px" width="10" height="12" viewBox="0 0 10 12" fill="none" stroke="#a9bcc9" stroke-width="1.100"><path d="M.8.800h5l3.400 3.400v7h-8.400zM5.800.8v3.400h3.400"/></svg>
      <span style="left:25px">Swagger Preview - /Users/hina.f/Home/Users/hina.f/WorkSpace/cityinsight_copilot/cityinsight_copilot_v2/docs/swagger.yml</span>
      <svg style="left:608px;top:8px" width="8" height="8" viewBox="0 0 8 8"><path d="M.5.500l7 7M7.500.5l-7 7" stroke="#9d9d9d" stroke-width="1" fill="none"/></svg>
    </div>
    <svg style="position:absolute;left:700px;top:11px" width="12" height="3" viewBox="0 0 12 3" fill="#cccccc"><circle cx="1.500" cy="1.500" r="1"/><circle cx="6" cy="1.500" r="1"/><circle cx="10.500" cy="1.500" r="1"/></svg>
  </div>
  <div id="sw">
    <div class="abs" id="title" style="left:15px;top:37.500px;font-size:31.500px;line-height:44px;font-weight:bold;letter-spacing:0.1px;color:#3b4151">Get Story API</div>
    <div class="badge" style="left:222px;width:43px;background:#7d8492">1.0.0</div>
    <div class="badge" style="left:268px;width:40px;background:#86bd1c">OAS3</div>
    <div class="abs" id="desc" style="left:16px;top:93.500px;font-size:10.800px;line-height:20px;letter-spacing:0.02px">指定された条件に基づいて物語を生成するAPIです</div>
    <div style="position:absolute;left:0;top:150.500px;width:719px;height:89.5px;background:#fff;border-bottom:1px solid #e3e3e3"></div>
    <div class="abs" id="srv" style="left:16px;top:176px;font-size:11px;line-height:16px;font-weight:bold;letter-spacing:-0.33px">Servers</div>
    <div style="position:absolute;left:15px;top:192.500px;width:199px;height:23.500px;border:2px solid #474a54;border-radius:4px;background:#f7f7f7;box-shadow:0 1px 2px rgba(0,0,0,.25)"></div>
    <div class="abs" id="sel" style="left:25.200px;top:194.500px;font-size:11.500px;line-height:20px;font-weight:bold"><span style="letter-spacing:.49px">https://nyanko.jp</span> - <span style="font-size:10.700px;margin-left:1.800px;letter-spacing:.05px">本番環境</span></div>
    <svg style="position:absolute;left:193px;top:201.500px" width="8" height="6" viewBox="0 0 8 6"><path d="M1 1.200l3 3 3-3" fill="none" stroke="#222" stroke-width="1.300"/></svg>
    <div style="position:absolute;left:16px;top:270.500px;width:692px;height:31.500px;border:1px solid #d8dde7;border-radius:4px;background:#fff"></div>
    <div class="abs" id="flt" style="left:24.500px;top:276px;font-size:14px;line-height:20px;color:#858585;letter-spacing:0.08px">Filter by tag</div>
<div class="abs tagname" style="left:23.25px;top:329.60px;letter-spacing:1.24px">fantasy</div>
<div class="abs tagdesc" style="left:106.75px;top:334.00px">ファンタジー小説を書きます</div>
<svg style="position:absolute;left:673px;top:339.50px" width="16" height="10" viewBox="0 0 16 10"><path d="M1.500 8.300l6.500-6.500 6.500 6.500" fill="none" stroke="#1b1b1b" stroke-width="1.400"/></svg>
<div class="rule" style="top:371.60px"></div>
<div class="op" style="top:376.00px"><div class="get">GET</div><div class="path">/api/v1.0.0/story/fantasy</div><div class="sum" style="left:239.30px">ファンタジー小説を書く</div><svg style="position:absolute;left:672.500px;top:12.500px" width="16" height="10" viewBox="0 0 16 10"><path d="M1.300 1.500l6.700 6.700 6.700-6.700" fill="none" stroke="#1b1b1b" stroke-width="1.400"/></svg></div>
<div class="abs tagname" style="left:22.50px;top:433.85px;letter-spacing:1.35px">mystery</div>
<div class="abs tagdesc" style="left:112.30px;top:438.25px">ミステリー小説を書きます</div>
<svg style="position:absolute;left:673px;top:443.75px" width="16" height="10" viewBox="0 0 16 10"><path d="M1.500 8.300l6.500-6.500 6.500 6.500" fill="none" stroke="#1b1b1b" stroke-width="1.400"/></svg>
<div class="rule" style="top:475.85px"></div>
<div class="op" style="top:480.25px"><div class="get">GET</div><div class="path">/api/v1.0.0/story/mystery</div><div class="sum" style="left:244.40px">ミステリー小説を書く</div><svg style="position:absolute;left:672.500px;top:12.500px" width="16" height="10" viewBox="0 0 16 10"><path d="M1.300 1.500l6.700 6.700 6.700-6.700" fill="none" stroke="#1b1b1b" stroke-width="1.400"/></svg></div>
<div class="abs tagname" style="left:23.50px;top:538.10px;letter-spacing:1.11px">fairy tale</div>
<div class="abs tagdesc" style="left:120.90px;top:542.50px">童話を書きます</div>
<svg style="position:absolute;left:673px;top:548.00px" width="16" height="10" viewBox="0 0 16 10"><path d="M1.500 8.300l6.500-6.500 6.500 6.500" fill="none" stroke="#1b1b1b" stroke-width="1.400"/></svg>
<div class="rule" style="top:580.10px"></div>
<div class="op" style="top:584.50px"><div class="get">GET</div><div class="path">/api/v1.0.0/story/fairy_tale</div><div class="sum" style="left:252.50px">童話を書く</div><svg style="position:absolute;left:672.500px;top:12.500px" width="16" height="10" viewBox="0 0 16 10"><path d="M1.300 1.500l6.700 6.700 6.700-6.700" fill="none" stroke="#1b1b1b" stroke-width="1.400"/></svg></div>
  </div>
</div>
</body>
</html>
